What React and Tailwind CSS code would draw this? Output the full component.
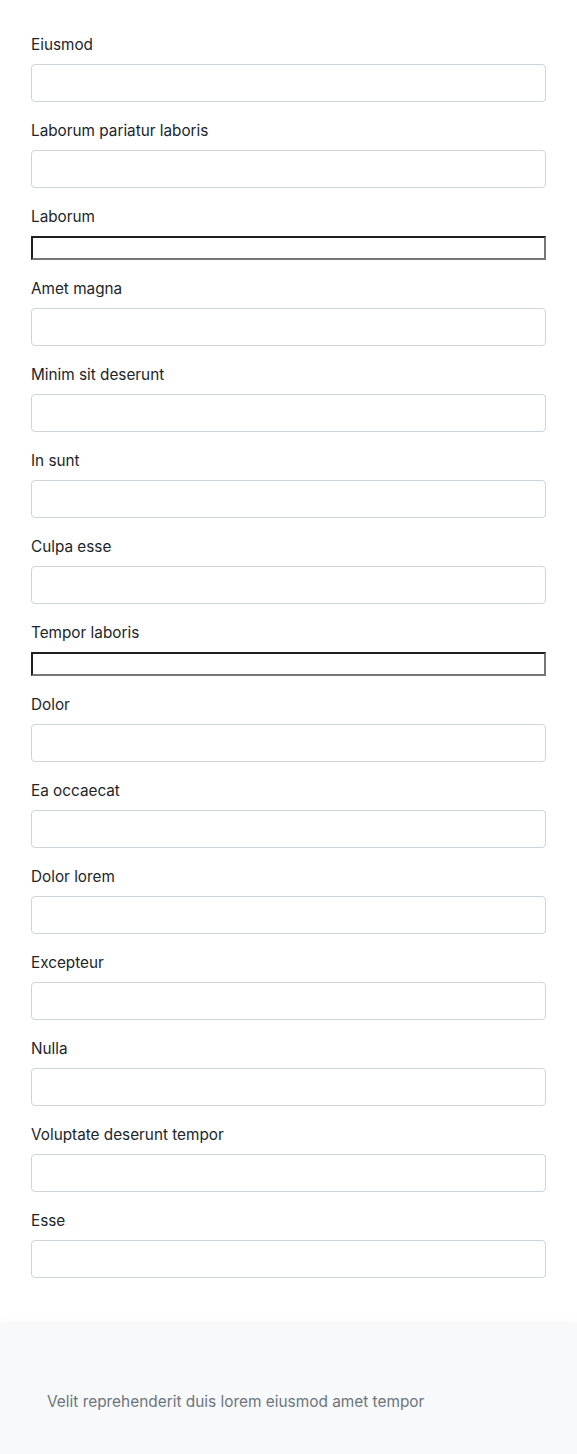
const fields = [
  { label: "Eiusmod" },
  { label: "Laborum pariatur laboris" },
  { label: "Laborum", odd: true },
  { label: "Amet magna" },
  { label: "Minim sit deserunt" },
  { label: "In sunt" },
  { label: "Culpa esse" },
  { label: "Tempor laboris", odd: true },
  { label: "Dolor" },
  { label: "Ea occaecat" },
  { label: "Dolor lorem" },
  { label: "Excepteur" },
  { label: "Nulla" },
  { label: "Voluptate deserunt tempor" },
  { label: "Esse" },
];

export default function App() {
  return (
    <div className="min-h-[1454px] bg-white flex flex-col" style={{ fontFamily: "Inter, 'Liberation Sans', sans-serif" }}>
      <form className="px-[31px] pt-8 pb-7 flex flex-col">
        {fields.map((f, i) => (
          <div key={i} className="flex flex-col mb-4">
            <label className="block text-[15.3px] leading-[22px] pt-[2px] text-[#212529] mb-2">{f.label}</label>
            {f.odd ? (
              <input
                type="text"
                className="block h-6 w-full bg-white border-2 border-t-[#1f1f1f] border-l-[#1f1f1f] border-b-[#767676] border-r-[#767676] outline-none"
              />
            ) : (
              <input
                type="text"
                className="block h-[38px] w-full bg-white border border-[#ced4da] rounded outline-none"
              />
            )}
          </div>
        ))}
      </form>
      <footer className="flex-1 bg-[#f8f9fa] shadow-[0_-4px_8px_rgba(0,0,0,0.015)] px-[47px] pt-[68px] pb-10">
        <p className="text-[15.4px] leading-6 text-[#6c757d]">Velit reprehenderit duis lorem eiusmod amet tempor</p>
      </footer>
    </div>
  );
}
